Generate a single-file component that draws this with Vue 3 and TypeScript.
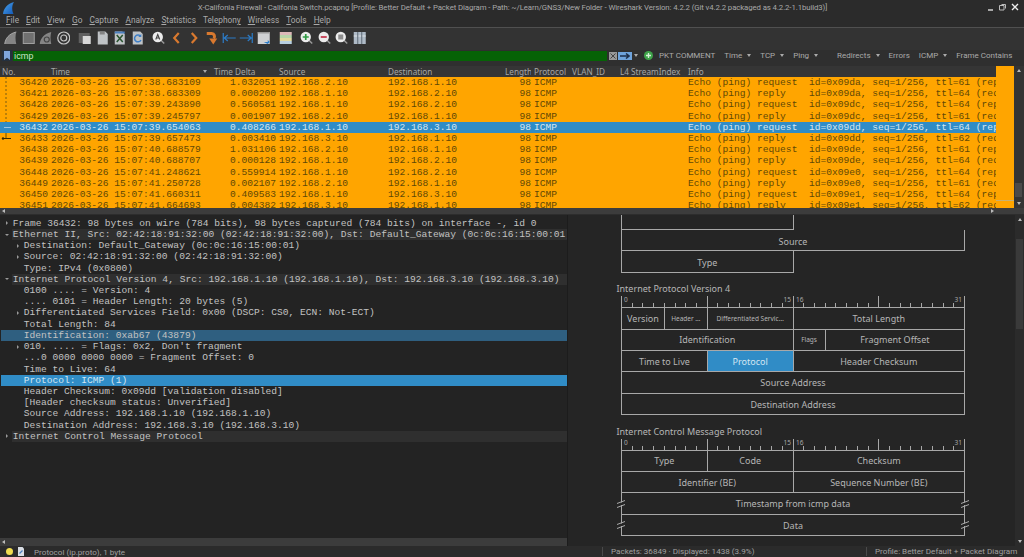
<template>
  <div class="app">
    <div class="titlebar">
      <svg class="logo" width="12" height="12" viewBox="0 0 12 12">
        <defs>
          <linearGradient id="fin" x1="0" y1="0" x2="1" y2="1">
            <stop offset="0" stop-color="#4aa3ea" />
            <stop offset="1" stop-color="#1459b8" />
          </linearGradient>
        </defs>
        <path d="M0 12C.5 6.500 4.500 1.500 11 0c-2 3-2.500 7.500-.5 12z" fill="url(#fin)" />
      </svg>
      <span class="title">X-Califonia Firewall - Califonia Switch.pcapng [Profile: Better Default + Packet Diagram  -  Path: ~/Learn/GNS3/New Folder  -  Wireshark Version: 4.2.2 (Git v4.2.2 packaged as 4.2.2-1.1build3)]</span>
      <div class="win-btns">
        <svg width="7" height="8" viewBox="0 0 7 8"><path d="M1 7h5" stroke="#ddd" stroke-width="1.400" /></svg>
        <svg width="7" height="8" viewBox="0 0 7 8"><path d="M2.500 1.500h4v4M.5 2.500h4.500v4.500H.5z" stroke="#bbb" fill="none" /></svg>
        <svg width="8" height="8" viewBox="0 0 8 8"><path d="M1 1l6 6M7 1L1 7" stroke="#eee" stroke-width="1.400" /></svg>
      </div>
    </div>

    <div class="menubar">
      <span v-for="m in menus" :key="m.label">{{ m.label.slice(0, m.u) }}<u>{{ m.label[m.u] }}</u>{{ m.label.slice(m.u + 1) }}</span>
    </div>

    <div class="toolbar">
      <div v-for="(group, i) in toolGroups" :key="i" class="tool-group">
        <svg v-for="name in group" :key="name" class="tool" width="14" height="14" viewBox="0 0 14 14" v-html="icons[name]"></svg>
      </div>
    </div>

    <div class="filterbar">
      <div class="bookmark">
        <svg width="6" height="9" viewBox="0 0 6 9"><path d="M0 0h6v9L3 6.800 0 9z" fill="#7fa6dc" /></svg>
      </div>
      <div class="filter-input">icmp</div>
      <svg class="clear" width="8" height="8" viewBox="0 0 8 8">
        <rect width="8" height="8" fill="#999" />
        <path d="M1.500 1.500l5 5M6.500 1.500l-5 5" stroke="#444" />
      </svg>
      <div class="apply">
        <svg width="10" height="6" viewBox="0 0 10 6"><path d="M0 3h8M6 .5L9 3 6 5.500" stroke="#1d2f4a" stroke-width="1.500" fill="none" /></svg>
      </div>
      <span class="caret filter-caret"></span>
      <svg class="plus" width="9" height="9" viewBox="0 0 9 9">
        <circle cx="4.500" cy="4.500" r="4.500" fill="#3fa34a" />
        <path d="M4.500 2v5M2 4.500h5" stroke="#d8f0d8" stroke-width="1.300" />
      </svg>
      <div class="filter-btns">
        <span v-for="b in filterButtons" :key="b.label" class="filter-btn" :class="{ wide: b.wide }">
          {{ b.label }}<span v-if="b.caret" class="caret"></span>
        </span>
      </div>
    </div>

    <div class="packets">
      <div class="packet-main">
        <div class="cols col-head">
          <span>No.</span>
          <span class="head-time">Time<span class="sort"></span></span>
          <span>Time Delta</span>
          <span>Source</span>
          <span>Destination</span>
          <span>Length</span>
          <span>Protocol</span>
          <span>VLAN_ID</span>
          <span>L4 StreamIndex</span>
          <span>Info</span>
        </div>
        <div class="packet-rows">
          <svg class="related" width="14" height="132" viewBox="0 0 14 132">
            <path d="M6 0v45" stroke="#7a5c10" stroke-dasharray="2 2" />
            <path d="M4 50.500h7" stroke="#9cc4e2" />
            <path d="M6 56v6" stroke="#6b5000" />
            <path d="M3 61.500h8" stroke="#3a2c00" />
            <circle cx="3" cy="61.500" r="1.200" fill="#3a2c00" />
          </svg>
          <div v-for="p in packets" :key="p.no" class="cols packet" :class="{ selected: p.no === 36432 }">
            <span class="right">{{ p.no }}</span>
            <span>2026-03-26 15:07:{{ p.time }}</span>
            <span class="right">{{ p.delta }}</span>
            <span>192.168.{{ p.src }}</span>
            <span>192.168.{{ p.dst }}</span>
            <span class="right">98</span>
            <span>ICMP</span>
            <span></span>
            <span></span>
            <span class="info">{{ infoText(p) }}</span>
          </div>
        </div>
      </div>
      <div class="minimap">
        <span class="minimap-mark"></span>
      </div>
      <div class="vscroll">
        <span class="arrow-up"></span>
        <span class="packet-thumb"></span>
        <span class="arrow-down"></span>
      </div>
    </div>

    <div class="hscroll packet-hscroll">
      <span class="arrow-left"></span>
      <span class="arrow-right"></span>
    </div>

    <div class="split">
      <div class="left-pane">
        <div class="tree">
          <div v-for="(row, i) in tree" :key="i" class="tree-row" :class="row.kind">
            <span class="indent" :class="{ deep: row.level === 1 }"></span>
            <span class="twisty">
              <span v-if="row.arrow" :class="row.arrow === 'down' ? 'tri-down' : 'tri-right'"></span>
            </span>
            <span class="tree-text">{{ row.text }}</span>
          </div>
        </div>
        <div class="hscroll tree-hscroll"><span class="arrow-left"></span></div>
      </div>

      <div class="right-pane">
        <div class="diagram">
          <div v-for="(sec, i) in sections" :key="i" class="section">
            <template v-if="sec.title">
              <div class="sec-title">{{ sec.title }}</div>
              <svg class="ruler" width="345" height="11" viewBox="0 0 345 11">
                <path
                  v-for="b in 33"
                  :key="b"
                  :d="`M${tickX(b - 1)} ${(b - 1) % 8 === 0 ? 0 : 7}V11`"
                  stroke="#a8a8a8"
                />
                <text x="3" y="6" class="bit">0</text>
                <text x="170" y="6" class="bit" text-anchor="end">15</text>
                <text x="175" y="6" class="bit">16</text>
                <text x="341" y="6" class="bit" text-anchor="end">31</text>
              </svg>
            </template>
            <div class="grid" :class="{ cut: !sec.title }">
              <div
                v-for="cell in sec.cells"
                :key="cell.label + cell.bits"
                class="cell"
                :class="{ small: cell.small, active: cell.label === 'Protocol', empty: cell.label === '' }"
                :style="{ gridColumn: `span ${cell.bits}` }"
              >
                {{ cell.label }}
                <template v-if="cell.broken">
                  <svg class="brk brk-l" width="10" height="10" viewBox="0 0 10 10"><path d="M3 3.500h4v2.500H3z" fill="#252525" /><path d="M1 4.500l8-3M1 8.500l8-3" stroke="#aaa" /></svg>
                  <svg class="brk brk-r" width="10" height="10" viewBox="0 0 10 10"><path d="M3 3.500h4v2.500H3z" fill="#252525" /><path d="M1 4.500l8-3M1 8.500l8-3" stroke="#aaa" /></svg>
                </template>
              </div>
            </div>
          </div>
        </div>
        <div class="vscroll diagram-scroll">
          <span class="arrow-up"></span>
          <span class="diagram-thumb"></span>
          <span class="arrow-down"></span>
        </div>
      </div>
    </div>

    <div class="statusbar">
      <span class="dot"></span>
      <svg class="doc" width="8" height="9" viewBox="0 0 8 9">
        <path d="M1 0h4.500L7 1.500V9H1z" fill="#d8dde4" />
        <path d="M2.500 6.500l3-3" stroke="#4a7fc0" stroke-width="1.200" />
      </svg>
      <span class="st-field">Protocol (ip.proto), 1 byte</span>
      <span class="st-sep st-packets">Packets: 36849 · Displayed: 1438 (3.9%)</span>
      <span class="st-sep st-profile">Profile: Better Default + Packet Diagram</span>
    </div>
  </div>
</template>

<script setup lang="ts">
interface Packet {
  no: number
  time: string
  delta: string
  src: string
  dst: string
  kind: 'request' | 'reply'
  id: string
  ttl: number
  peer: number
}

interface TreeRow {
  text: string
  level: number
  arrow?: 'right' | 'down'
  kind?: 'head' | 'sel' | 'sel-dim'
}

interface Cell {
  label: string
  bits: number
  small?: boolean
  broken?: boolean
}

const menus = [
  { label: 'File', u: 0 },
  { label: 'Edit', u: 0 },
  { label: 'View', u: 0 },
  { label: 'Go', u: 0 },
  { label: 'Capture', u: 0 },
  { label: 'Analyze', u: 0 },
  { label: 'Statistics', u: 0 },
  { label: 'Telephony', u: 8 },
  { label: 'Wireless', u: 0 },
  { label: 'Tools', u: 0 },
  { label: 'Help', u: 0 },
]

const toolGroups = [
  ['start', 'stop', 'restart', 'options'],
  ['open', 'file', 'close', 'reload'],
  ['find', 'prev', 'next', 'jump', 'first', 'last', 'auto'],
  ['color'],
  ['zoomin', 'zoomout', 'zoomfit', 'resize'],
]

const lens = '<path d="M9.500 9.500l3 3" stroke="#999" stroke-width="1.500"/><circle cx="6" cy="6" r="5.200" fill="#ececec"/>'
const page = '<path d="M2 .5h7.500L12 3v10.500H2z" fill="#bfc3c6"/>'

const icons: Record<string, string> = {
  start: '<path d="M1 13C1.500 7.500 5.500 2.500 12.500 1c-1 3.500-1 8 0 12z" fill="#858585"/><path d="M1 13C1.500 7.500 5.500 2.500 12.500 1" fill="none" stroke="#a8a8a8"/>',
  stop: '<rect x="1.500" y="1.500" width="11" height="11" fill="#707070" stroke="#a0a0a0"/>',
  restart: '<path d="M1 13C1.500 7.500 5.500 2.500 12.500 1c-1 3.500-1 8 0 12z" fill="#858585"/><circle cx="8" cy="8.500" r="2.500" fill="none" stroke="#444" stroke-width="1.200"/>',
  options: '<circle cx="7" cy="7" r="6" fill="none" stroke="#c8c8c8" stroke-width="1.200"/><circle cx="7" cy="7" r="3" fill="none" stroke="#c8c8c8" stroke-width="1.200"/>',
  open: '<rect x="1" y="2" width="11" height="10" fill="#606060"/><rect x="5" y="5" width="8" height="8" fill="#d8d8d8"/>',
  file: page + '<rect x="4" y="1" width="5" height="2.500" fill="#848484"/>',
  close: page + '<path d="M4 4l6 7M10 4l-6 7" stroke="#29532f" stroke-width="1.500"/><path d="M2 .5h10v2H2z" fill="#4a7fc0"/>',
  reload: page + '<path d="M10 5.500A3.400 3.400 0 1 0 10.200 9" fill="none" stroke="#3f7fc6" stroke-width="1.500"/><path d="M10.500 3v3h-3z" fill="#3f7fc6"/>',
  find: lens + '<path d="M4 8.500L6 3.500l2 5M4.700 7h2.600" fill="none" stroke="#444" stroke-width="1.100"/>',
  prev: '<path d="M9 2L4.500 7 9 12" fill="none" stroke="#d9792f" stroke-width="2.200"/>',
  next: '<path d="M5 2l4.500 5L5 12" fill="none" stroke="#d9792f" stroke-width="2.200"/>',
  jump: '<path d="M2 2.500h5a3 3 0 0 1 2 5" fill="none" stroke="#d9792f" stroke-width="3"/><path d="M4.500 7.500L8.500 13.500l4-6z" fill="#d9792f"/>',
  first: '<path d="M1.500 2v10M2 7h12M6 4L2.500 7 6 10" fill="none" stroke="#2c7cc8" stroke-width="1.200"/>',
  last: '<path d="M12.500 2v10M0 7h12M8 4l3.500 3L8 10" fill="none" stroke="#2c7cc8" stroke-width="1.200"/>',
  auto: '<rect x="1" y="1" width="12" height="12" fill="#cfd1d3"/><rect x="1" y="1" width="12" height="1.500" fill="#999"/><path d="M7 11h4V9l2 2-2 2z" fill="#2c7cc8"/>',
  color: '<rect x="1" y="1" width="12" height="3" fill="#dcb8b8"/><rect x="1" y="4" width="12" height="3" fill="#b8d4a8"/><rect x="1" y="7" width="12" height="3" fill="#e0d9a0"/><rect x="1" y="10" width="12" height="3" fill="#b8cfe0"/>',
  zoomin: lens + '<path d="M6 3v6M3 6h6" stroke="#2f9a44" stroke-width="1.700"/>',
  zoomout: lens + '<path d="M3 6h6" stroke="#c8455a" stroke-width="1.900"/>',
  zoomfit: lens + '<rect x="3.500" y="3.500" width="5" height="5" fill="#8d8d8d"/>',
  resize: '<rect x="1" y="1" width="12" height="12" fill="#aebac6"/><path d="M1 5h12" stroke="#dde2e6"/><path d="M5 1v12M9 1v12" stroke="#5c6874"/>',
}

const filterButtons = [
  { label: 'PKT COMMENT' },
  { label: 'Time', caret: true },
  { label: 'TCP', caret: true },
  { label: 'Ping', caret: true },
  { label: 'Redirects', caret: true, wide: true },
  { label: 'Errors' },
  { label: 'ICMP', caret: true },
  { label: 'Frame Contains' },
]

const packets: Packet[] = [
  { no: 36420, time: '38.683109', delta: '1.032051', src: '2.10', dst: '1.10', kind: 'request', id: '09da', ttl: 61, peer: 36421 },
  { no: 36421, time: '38.683309', delta: '0.000200', src: '1.10', dst: '2.10', kind: 'reply', id: '09da', ttl: 64, peer: 36420 },
  { no: 36428, time: '39.243890', delta: '0.560581', src: '1.10', dst: '2.10', kind: 'request', id: '09dc', ttl: 64, peer: 36429 },
  { no: 36429, time: '39.245797', delta: '0.001907', src: '2.10', dst: '1.10', kind: 'reply', id: '09dc', ttl: 61, peer: 36428 },
  { no: 36432, time: '39.654063', delta: '0.408266', src: '1.10', dst: '3.10', kind: 'request', id: '09dd', ttl: 64, peer: 36433 },
  { no: 36433, time: '39.657473', delta: '0.003410', src: '3.10', dst: '1.10', kind: 'reply', id: '09dd', ttl: 62, peer: 36432 },
  { no: 36438, time: '40.688579', delta: '1.031106', src: '2.10', dst: '1.10', kind: 'request', id: '09de', ttl: 61, peer: 36439 },
  { no: 36439, time: '40.688707', delta: '0.000128', src: '1.10', dst: '2.10', kind: 'reply', id: '09de', ttl: 64, peer: 36438 },
  { no: 36448, time: '41.248621', delta: '0.559914', src: '1.10', dst: '2.10', kind: 'request', id: '09e0', ttl: 64, peer: 36449 },
  { no: 36449, time: '41.250728', delta: '0.002107', src: '2.10', dst: '1.10', kind: 'reply', id: '09e0', ttl: 61, peer: 36448 },
  { no: 36450, time: '41.660311', delta: '0.409583', src: '1.10', dst: '3.10', kind: 'request', id: '09e1', ttl: 64, peer: 36451 },
  { no: 36451, time: '41.664693', delta: '0.004382', src: '3.10', dst: '1.10', kind: 'reply', id: '09e1', ttl: 62, peer: 36450 },
]

const infoText = (p: Packet) => {
  const peer = p.kind === 'request' ? `reply in ${p.peer}` : `request in ${p.peer}`
  return `Echo (ping) ${p.kind.padEnd(7)}  id=0x${p.id}, seq=1/256, ttl=${p.ttl} (${peer})`
}

const tree: TreeRow[] = [
  { text: 'Frame 36432: 98 bytes on wire (784 bits), 98 bytes captured (784 bits) on interface -, id 0', level: 0, arrow: 'right' },
  { text: 'Ethernet II, Src: 02:42:18:91:32:00 (02:42:18:91:32:00), Dst: Default_Gateway (0c:0c:16:15:00:01)', level: 0, arrow: 'down', kind: 'head' },
  { text: 'Destination: Default_Gateway (0c:0c:16:15:00:01)', level: 1, arrow: 'right' },
  { text: 'Source: 02:42:18:91:32:00 (02:42:18:91:32:00)', level: 1, arrow: 'right' },
  { text: 'Type: IPv4 (0x0800)', level: 1 },
  { text: 'Internet Protocol Version 4, Src: 192.168.1.10 (192.168.1.10), Dst: 192.168.3.10 (192.168.3.10)', level: 0, arrow: 'down', kind: 'head' },
  { text: '0100 .... = Version: 4', level: 1 },
  { text: '.... 0101 = Header Length: 20 bytes (5)', level: 1 },
  { text: 'Differentiated Services Field: 0x00 (DSCP: CS0, ECN: Not-ECT)', level: 1, arrow: 'right' },
  { text: 'Total Length: 84', level: 1 },
  { text: 'Identification: 0xab67 (43879)', level: 1, kind: 'sel-dim' },
  { text: "010. .... = Flags: 0x2, Don't fragment", level: 1, arrow: 'right' },
  { text: '...0 0000 0000 0000 = Fragment Offset: 0', level: 1 },
  { text: 'Time to Live: 64', level: 1 },
  { text: 'Protocol: ICMP (1)', level: 1, kind: 'sel' },
  { text: 'Header Checksum: 0x09dd [validation disabled]', level: 1 },
  { text: '[Header checksum status: Unverified]', level: 1 },
  { text: 'Source Address: 192.168.1.10 (192.168.1.10)', level: 1 },
  { text: 'Destination Address: 192.168.3.10 (192.168.3.10)', level: 1 },
  { text: 'Internet Control Message Protocol', level: 0, arrow: 'right', kind: 'head' },
]

const sections: { title: string; cells: Cell[] }[] = [
  {
    title: '',
    cells: [
      { label: '', bits: 16 },
      { label: ' ', bits: 16 },
      { label: 'Source', bits: 32 },
      { label: 'Type', bits: 16 },
    ],
  },
  {
    title: 'Internet Protocol Version 4',
    cells: [
      { label: 'Version', bits: 4 },
      { label: 'Header …', bits: 4, small: true },
      { label: 'Differentiated Servic…', bits: 8, small: true },
      { label: 'Total Length', bits: 16 },
      { label: 'Identification', bits: 16 },
      { label: 'Flags', bits: 3, small: true },
      { label: 'Fragment Offset', bits: 13 },
      { label: 'Time to Live', bits: 8 },
      { label: 'Protocol', bits: 8 },
      { label: 'Header Checksum', bits: 16 },
      { label: 'Source Address', bits: 32 },
      { label: 'Destination Address', bits: 32 },
    ],
  },
  {
    title: 'Internet Control Message Protocol',
    cells: [
      { label: 'Type', bits: 8 },
      { label: 'Code', bits: 8 },
      { label: 'Checksum', bits: 16 },
      { label: 'Identifier (BE)', bits: 16 },
      { label: 'Sequence Number (BE)', bits: 16 },
      { label: 'Timestamp from icmp data', bits: 32, broken: true },
      { label: 'Data', bits: 32, broken: true },
    ],
  },
]

const tickX = (bit: number) => Math.round(bit * 10.72) + 0.5
</script>

<style scoped>
.app {
  width: 1024px;
  height: 557px;
  overflow: hidden;
  display: flex;
  flex-direction: column;
  background: #2b2b2b;
  color: #b8b8b8;
  font-family: Roboto, 'Noto Sans', sans-serif;
  font-size: 8px;
}

.titlebar {
  position: relative;
  height: 14px;
  flex: none;
  display: flex;
  align-items: center;
  justify-content: center;
  background: #2b2b2b;
}
.logo {
  position: absolute;
  left: 3px;
  top: 2px;
}
.title {
  font-size: 7.800px;
  letter-spacing: -0.100px;
  color: #a8a8a8;
  white-space: pre;
  margin-left: 1px;
}
.win-btns {
  position: absolute;
  right: 5px;
  top: 3px;
  display: flex;
  gap: 5px;
}

.menubar {
  height: 14px;
  flex: none;
  display: flex;
  align-items: center;
  gap: 7px;
  padding: 0 0 1px 6px;
  box-sizing: border-box;
  border-bottom: 1px solid #505050;
  font-size: 8.300px;
  color: #aaa;
}

.toolbar {
  height: 22px;
  flex: none;
  display: flex;
  align-items: center;
  gap: 4px;
  padding-left: 2px;
  padding-bottom: 3px;
  box-sizing: border-box;
  background: #333;
}
.tool-group {
  display: flex;
}
.tool {
  width: 14px;
  padding: 0 1.750px;
  flex: none;
}

.filterbar {
  height: 16px;
  flex: none;
  display: flex;
  align-items: center;
  padding-bottom: 5px;
  padding-left: 2px;
  box-sizing: border-box;
  background: #2f2f2f;
  position: relative;
}
.bookmark {
  width: 10px;
  height: 11px;
  background: #24303f;
  display: flex;
  align-items: center;
  justify-content: center;
  flex: none;
}
.filter-input {
  width: 594.500px;
  height: 10px;
  line-height: 10px;
  padding-left: 1.500px;
  margin-left: 0.500px;
  flex: none;
  box-sizing: border-box;
  background: #066206;
  color: #c9e2c9;
  font-size: 8.800px;
}
.clear {
  margin-left: 1.500px;
  flex: none;
}
.apply {
  width: 14px;
  height: 8px;
  margin-left: 1px;
  background: #6ea3dc;
  display: flex;
  align-items: center;
  justify-content: center;
  flex: none;
}
.caret {
  display: inline-block;
  width: 0;
  height: 0;
  margin-left: 5px;
  vertical-align: 1.500px;
  border-left: 2.500px solid transparent;
  border-right: 2.500px solid transparent;
  border-top: 3px solid #aaa;
}
.filter-caret {
  margin-left: 2.500px;
  flex: none;
}
.plus {
  margin-left: 6px;
  flex: none;
}
.filter-btns {
  display: flex;
  gap: 9px;
  margin-left: 6px;
  font-size: 8px;
  color: #aaa;
  white-space: nowrap;
}
.filter-btn.wide {
  margin-left: 10px;
}

.packets {
  height: 142px;
  flex: none;
  display: flex;
  background: #2b2b2b;
}
.packet-main {
  flex: 1;
  min-width: 0;
}
.cols {
  display: grid;
  grid-template-columns: 48px 163px 65px 109px 117px 29px 38px 48px 68px 311px;
  white-space: pre;
}
.cols > span {
  padding-left: 3px;
  overflow: hidden;
}
.cols > .right {
  padding-left: 0;
  text-align: right;
}
.col-head {
  height: 11px;
  line-height: 11px;
  background: #353535;
  font-family: 'Noto Sans', sans-serif;
  font-size: 8.200px;
  color: #a6a6a6;
}
.col-head > span:first-child {
  padding-left: 2px;
}
.head-time {
  display: flex;
  align-items: center;
  justify-content: space-between;
  padding-right: 4px;
}
.sort {
  width: 0;
  height: 0;
  border-left: 2.500px solid transparent;
  border-right: 2.500px solid transparent;
  border-top: 3px solid #aaa;
}
.packet-rows {
  position: relative;
  height: 131px;
  overflow: hidden;
  background: #ffa500;
  font-family: 'Liberation Mono', monospace;
  font-size: 9.600px;
  color: #5f4806;
}
.related {
  position: absolute;
  left: 0;
  top: 0;
  z-index: 1;
}
.packet {
  height: 11.200px;
  line-height: 11.200px;
}
.packet.selected {
  background: #308cc6;
  color: #d3e6f2;
}
.minimap {
  position: relative;
  width: 18px;
  margin-left: 0;
  background: #ffa500;
  flex: none;
}
.minimap-mark {
  position: absolute;
  left: 0;
  right: 0;
  top: 134px;
  height: 7px;
  border-top: 1px solid #c8b070;
}
.vscroll {
  position: relative;
  width: 10px;
  flex: none;
  background: #343434;
}
.arrow-up,
.arrow-down {
  position: absolute;
  left: 2.500px;
  width: 0;
  height: 0;
  border-left: 2.500px solid transparent;
  border-right: 2.500px solid transparent;
}
.arrow-up {
  top: 3px;
  border-bottom: 3px solid #bbb;
}
.arrow-down {
  bottom: 3px;
  border-top: 3px solid #bbb;
}
.packet-thumb {
  position: absolute;
  left: 1px;
  right: 2px;
  top: 117px;
  height: 14px;
  background: #4a4a4a;
}

.hscroll {
  position: relative;
  flex: none;
  background: #3c3c3c;
}
.packet-hscroll {
  height: 7px;
  border-bottom: 1px solid #2d2d2d;
  box-sizing: border-box;
}
.arrow-left,
.arrow-right {
  position: absolute;
  top: 1px;
  width: 0;
  height: 0;
  border-top: 2.500px solid transparent;
  border-bottom: 2.500px solid transparent;
}
.arrow-left {
  left: 2px;
  border-right: 3px solid #bbb;
}
.arrow-right {
  left: 991px;
  border-left: 3px solid #bbb;
}

.split {
  flex: 1;
  min-height: 0;
  display: flex;
}
.left-pane {
  width: 568px;
  flex: none;
  display: flex;
  flex-direction: column;
  border-right: 1px solid #1c1c1c;
  box-sizing: border-box;
  background: #232323;
}
.tree {
  flex: 1;
  min-height: 0;
  padding: 2.700px 0 0 1px;
  overflow: hidden;
  font-family: 'Liberation Mono', monospace;
  font-size: 9.600px;
  color: #c2c2c2;
}
.tree-row {
  display: flex;
  height: 11.230px;
  line-height: 11.230px;
  white-space: pre;
}
.indent.deep {
  width: 11px;
  flex: none;
}
.twisty {
  width: 11px;
  flex: none;
  display: flex;
  align-items: center;
  justify-content: center;
}
.tri-right {
  width: 0;
  height: 0;
  border-top: 2px solid transparent;
  border-bottom: 2px solid transparent;
  border-left: 2.500px solid #9a9a9a;
}
.tri-down {
  width: 0;
  height: 0;
  border-left: 2px solid transparent;
  border-right: 2px solid transparent;
  border-top: 2.500px solid #9a9a9a;
}
.tree-text {
  flex: 1;
  min-width: 0;
  overflow: hidden;
  padding-left: 0.700px;
}
.tree-row.head .tree-text {
  background: #2f2f2f;
}
.tree-row.sel-dim {
  background: #2f5f80;
}
.tree-row.sel {
  background: #308cc6;
  color: #d3e6f2;
}
.tree-hscroll {
  height: 8px;
}
.tree-hscroll .arrow-left {
  top: 1.500px;
}

.right-pane {
  flex: 1;
  min-width: 0;
  display: flex;
  background: #252525;
}
.diagram {
  flex: 1;
  padding-left: 53px;
  overflow: hidden;
  font-family: 'Noto Sans', sans-serif;
  font-size: 9px;
  color: #b6b6b6;
}
.section {
  width: 345px;
}
.sec-title {
  height: 11px;
  line-height: 11px;
  margin: 10.600px 0 1.900px -4.500px;
  white-space: nowrap;
}
.ruler {
  display: block;
}
.bit {
  font-size: 6.500px;
  fill: #a8a8a8;
}
.grid {
  display: grid;
  grid-template-columns: repeat(32, 10.720px);
  grid-auto-rows: 21.400px;
  width: 344px;
  border-left: 1px solid #a8a8a8;
  border-top: 1px solid #a8a8a8;
  box-sizing: border-box;
}
.grid.cut {
  border-top: 0;
  grid-template-rows: 15px;
}
.cell {
  position: relative;
  display: flex;
  align-items: center;
  justify-content: center;
  box-sizing: border-box;
  border-right: 1px solid #a8a8a8;
  border-bottom: 1px solid #a8a8a8;
  white-space: nowrap;
  overflow: visible;
}
.cut .cell {
  padding-top: 2px;
}
.cut .cell:nth-child(2) {
  border: 0;
}
.cell.small {
  font-size: 6.500px;
}
.cell.active {
  background: #308cc6;
  color: #d3e6f2;
}
.brk {
  position: absolute;
  top: 5.500px;
}
.brk-l {
  left: -6px;
}
.brk-r {
  right: -5.500px;
}
.diagram-scroll {
  width: 9px;
  background: #2b2b2b;
}
.diagram-thumb {
  position: absolute;
  left: 1px;
  right: 1px;
  top: 24px;
  height: 90px;
  background: #3a3a3a;
}

.statusbar {
  position: relative;
  height: 11px;
  flex: none;
  display: flex;
  align-items: center;
  background: #2b2b2b;
  font-size: 8.100px;
  color: #a0a0a0;
  white-space: nowrap;
}
.dot {
  width: 7px;
  height: 7px;
  margin-left: 6px;
  border-radius: 50%;
  background: #f0dc50;
  flex: none;
}
.doc {
  margin-left: 4px;
  flex: none;
}
.st-field {
  margin-left: 9px;
  width: 568px;
  flex: none;
}
.st-sep {
  flex: none;
  border-left: 1px solid #4a4a4a;
  height: 9px;
  line-height: 9px;
  padding-left: 8px;
}
.st-packets {
  width: 264px;
  box-sizing: border-box;
}
</style>

<style>
html,
body {
  background: #2b2b2b;
}
</style>
